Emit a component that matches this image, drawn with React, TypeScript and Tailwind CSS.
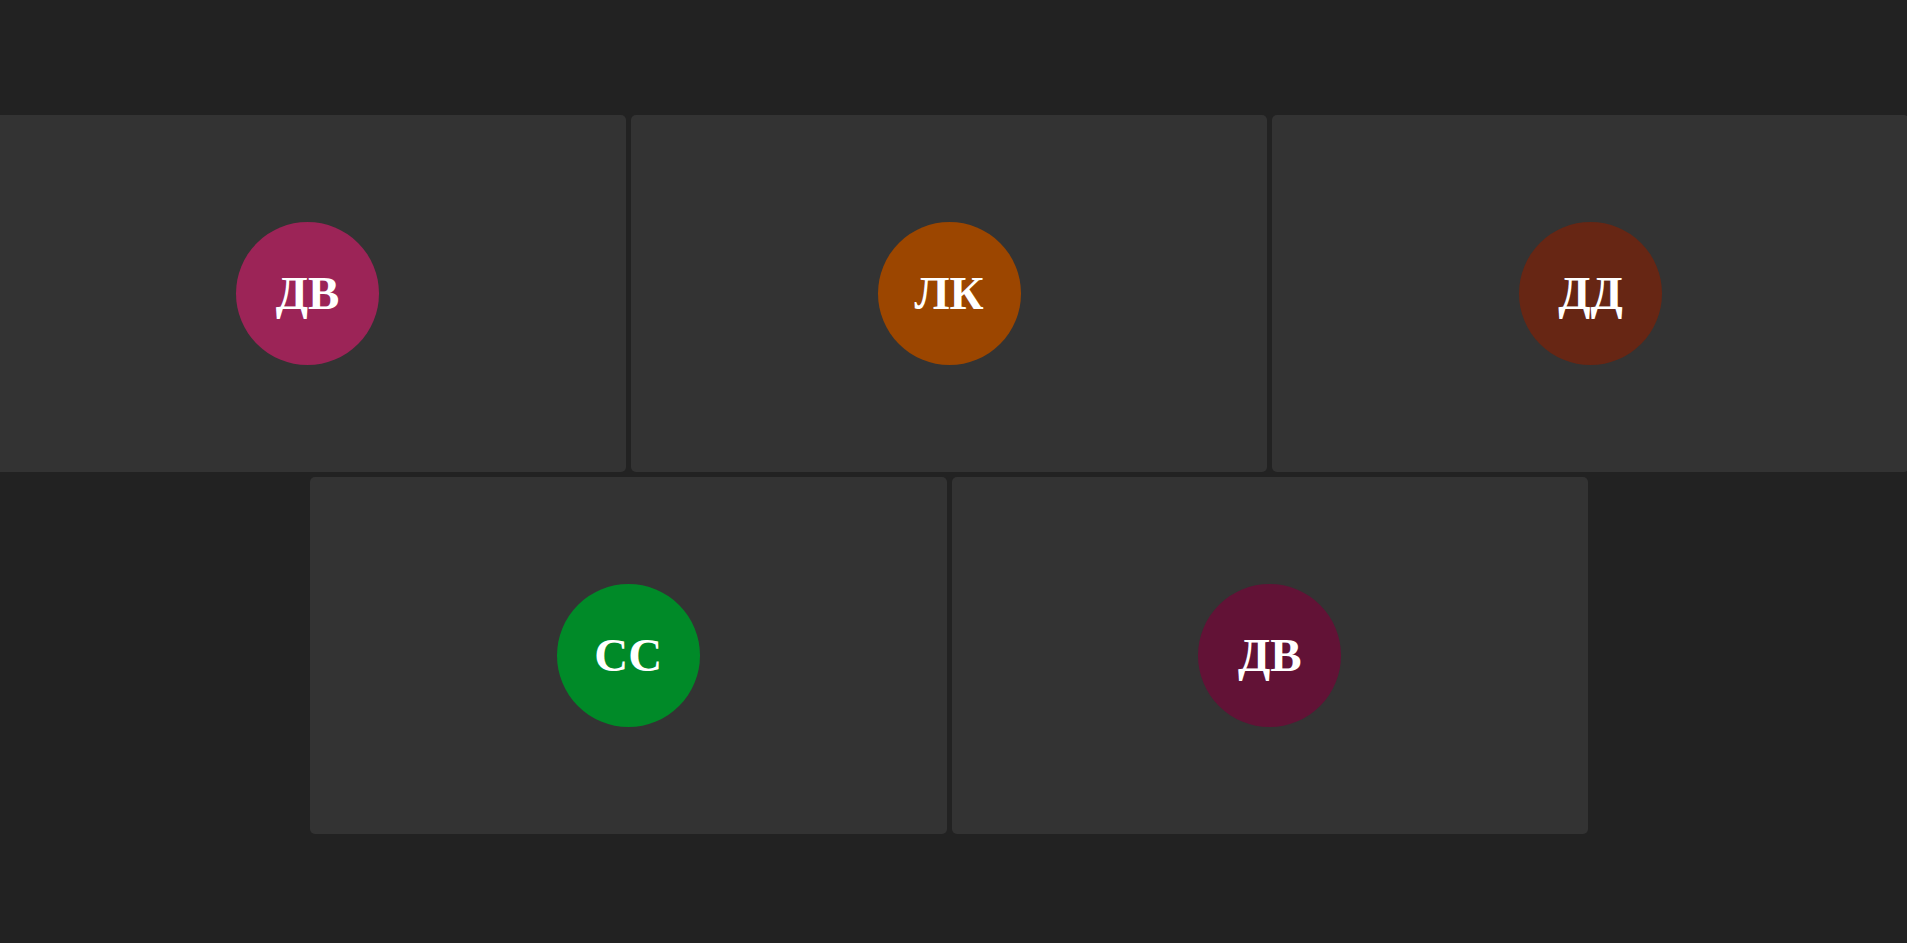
const rows = [
  [
    { initials: "ДВ", color: "bg-[#9c2457]" },
    { initials: "ЛК", color: "bg-[#9c4600]" },
    { initials: "ДД", color: "bg-[#672614]" },
  ],
  [
    { initials: "СС", color: "bg-[#008a28]" },
    { initials: "ДВ", color: "bg-[#621236]" },
  ],
]

function Tile({ initials, color }: { initials: string; color: string }) {
  return (
    <div className="flex h-[357px] w-[636.5px] shrink-0 items-center justify-center rounded-[5px] bg-[#333333]">
      <div
        className={`flex h-[143px] w-[143px] items-center justify-center rounded-full ${color}`}
      >
        <span className="font-['Liberation_Serif',serif] text-[47px] font-bold leading-none text-white">
          {initials}
        </span>
      </div>
    </div>
  )
}

export default function App() {
  return (
    <div className="h-[943px] w-full overflow-hidden bg-[#222222]">
      <div className="flex w-[1898px] flex-col gap-[5px] pt-[115px]">
        {rows.map((row, i) => (
          <div key={i} className="flex justify-center gap-[5px]">
            {row.map((t, j) => (
              <Tile key={j} initials={t.initials} color={t.color} />
            ))}
          </div>
        ))}
      </div>
    </div>
  )
}
